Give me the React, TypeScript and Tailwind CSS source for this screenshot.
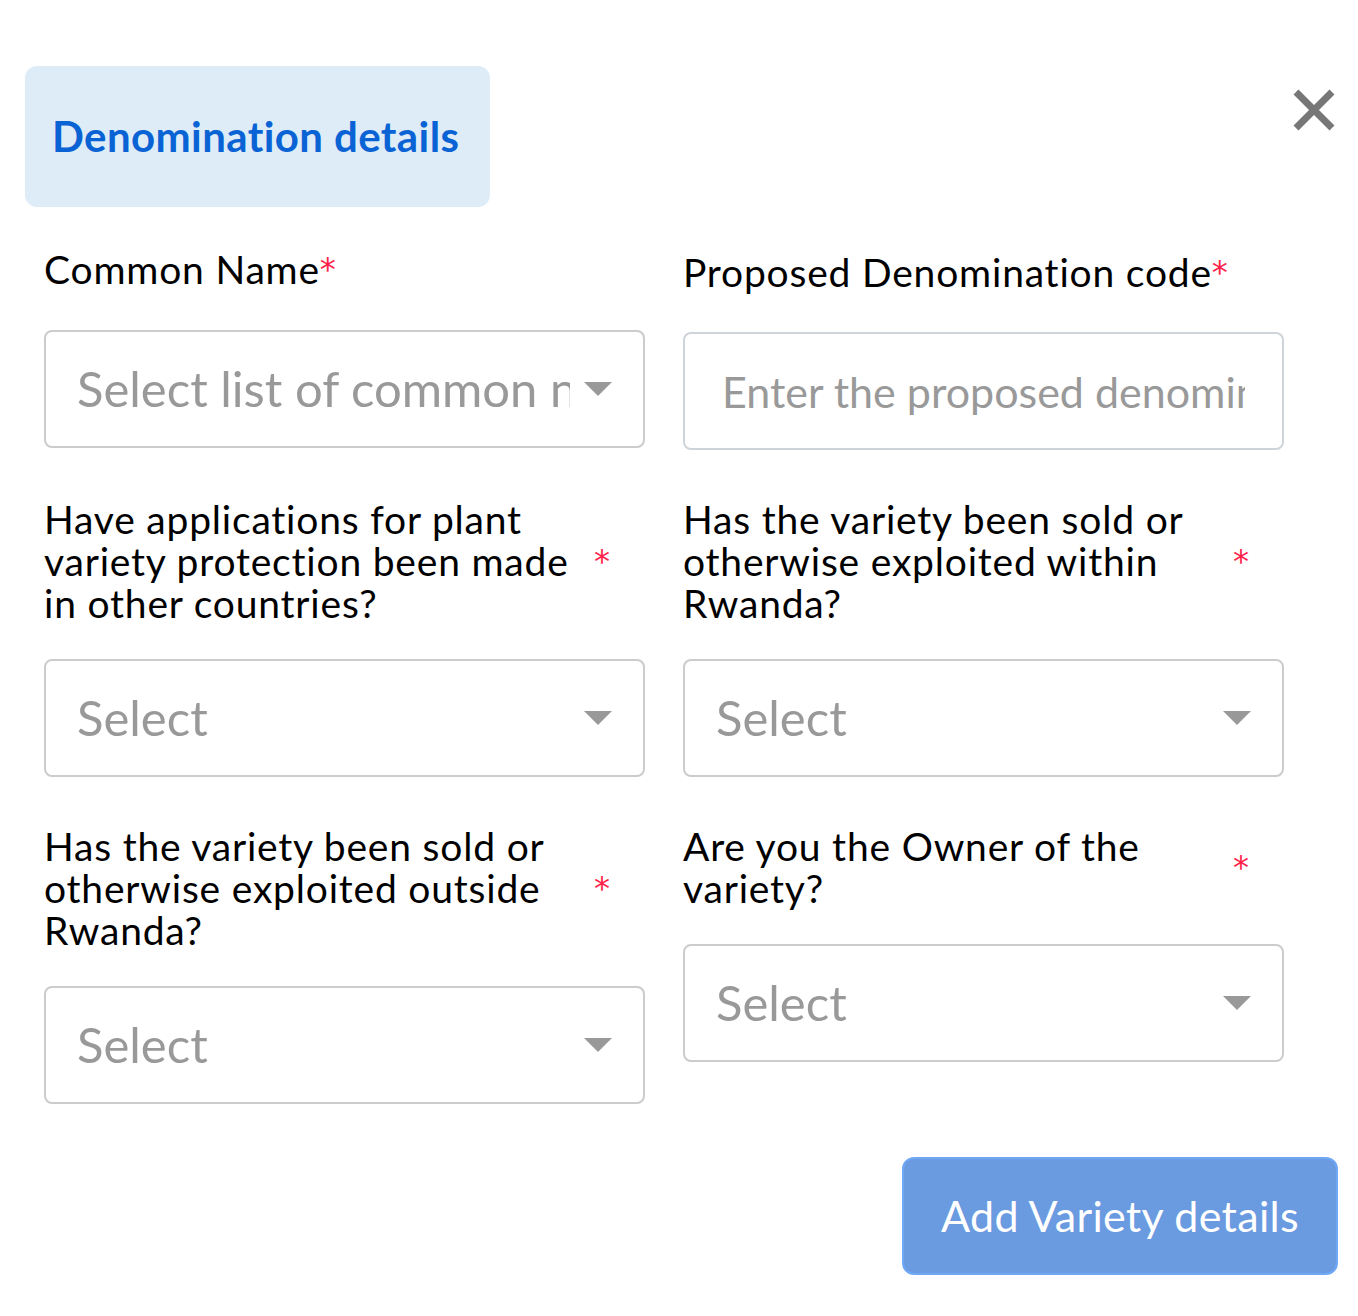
import { useState } from "react";

const Caret = () => (
  <svg width="28" height="14" viewBox="0 0 28 14" className="shrink-0">
    <path d="M0 0 L28 0 L14 14 Z" fill="#999999" />
  </svg>
);

const Star = () => (
  <span className="font-['DejaVu_Sans',sans-serif] text-[32px] tracking-normal text-[#ff1f4b] align-top">*</span>
);

interface SelectBoxProps {
  placeholder: string;
}

const SelectBox = ({ placeholder }: SelectBoxProps) => {
  return (
    <div className="h-[118px] w-full rounded-[8px] border-2 border-[#cccccc] bg-white flex items-center pl-[31px] pr-[31px] gap-[14px] cursor-pointer">
      <div className="flex-1 overflow-hidden whitespace-nowrap text-[49px] text-[#999999] leading-normal">
        {placeholder}
      </div>
      <Caret />
    </div>
  );
};

const QuestionLabel = ({ text }: { text: string }) => (
  <div className="flex items-center mb-[35px]">
    <div className="w-[540px] text-[39px] tracking-[0.8px] leading-[42px] text-black">{text}</div>
    <span className="ml-[10px] font-['DejaVu_Sans',sans-serif] text-[32px] leading-[42px] text-[#ff1f4b]">*</span>
  </div>
);

export default function App() {
  const [code, setCode] = useState("");

  return (
    <div className="min-h-[1316px] w-full bg-white font-['Lato',sans-serif]">
      <div className="flex items-start justify-between pt-[66px] pl-[25px] pr-[22px]">
        <div className="h-[141px] w-[465px] rounded-[12px] bg-[#deecf8] flex items-center pl-[27px]">
          <h1 className="text-[42px] font-bold text-[#0a63d4] tracking-[0.4px]">Denomination details</h1>
        </div>
        <button className="mt-[22px] w-[44px] h-[44px] flex items-center justify-center">
          <svg width="42" height="42" viewBox="0 0 42 42">
            <path d="M3 3 L39 39 M39 3 L3 39" stroke="#777777" strokeWidth="7" />
          </svg>
        </button>
      </div>

      <div className="grid grid-cols-2 gap-x-[38px] gap-y-[48px] pl-[44px] pr-[74px] mt-[41px] items-start">
        <div>
          <div className="text-[39px] tracking-[0.8px] leading-[42px] text-black mb-[40px]">
            Common Name<Star />
          </div>
          <SelectBox placeholder="Select list of common names" />
        </div>
        <div className="pt-[3px]">
          <div className="text-[39px] tracking-[0.8px] leading-[42px] text-black mb-[39px]">
            Proposed Denomination code<Star />
          </div>
          <input
            value={code}
            onChange={(e) => setCode(e.target.value)}
            placeholder="Enter the proposed denomination code"
            className="h-[118px] w-full rounded-[8px] border-2 border-[#cfd4da] bg-white px-[37px] text-[43px] text-black placeholder:text-[#999999] outline-none"
          />
        </div>

        <div>
          <QuestionLabel text="Have applications for plant variety protection been made in other countries?" />
          <SelectBox placeholder="Select" />
        </div>
        <div>
          <QuestionLabel text="Has the variety been sold or otherwise exploited within Rwanda?" />
          <SelectBox placeholder="Select" />
        </div>

        <div>
          <QuestionLabel text="Has the variety been sold or otherwise exploited outside Rwanda?" />
          <SelectBox placeholder="Select" />
        </div>
        <div>
          <QuestionLabel text="Are you the Owner of the variety?" />
          <SelectBox placeholder="Select" />
        </div>
      </div>

      <div className="flex justify-end pr-[20px] mt-[53px]">
        <button className="h-[118px] w-[436px] rounded-[12px] border-2 border-[#6ea8f5] bg-[#6a9ae0] text-[43px] text-white tracking-[0.3px]">
          Add Variety details
        </button>
      </div>
    </div>
  );
}
